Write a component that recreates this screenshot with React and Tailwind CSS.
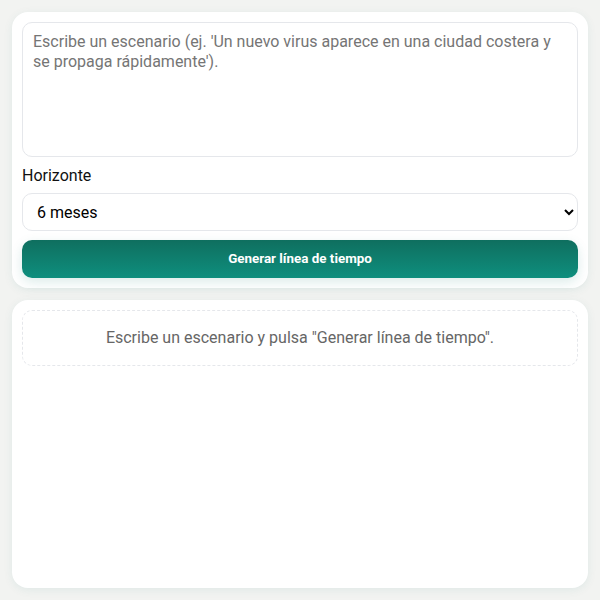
import { useState } from 'react';

const App = () => {
  const [scenario, setScenario] = useState('');
  const [horizon, setHorizon] = useState('6');

  return (
    <div
      className="h-screen bg-[#f2f3f1] p-3 flex flex-col gap-3"
      style={{ fontFamily: 'Roboto, "Noto Sans", sans-serif' }}
    >
      {/* Scenario form */}
      <div className="bg-white rounded-2xl p-[10px] shadow-[0_2px_10px_rgba(15,118,110,0.08)]">
        <textarea
          value={scenario}
          onChange={(e) => setScenario(e.target.value)}
          placeholder="Escribe un escenario (ej. 'Un nuevo virus aparece en una ciudad costera y se propaga rápidamente')."
          className="block w-full h-[135px] resize-none rounded-[10px] border border-[#e5e7eb] px-[10px] py-[9px] text-base leading-5 text-gray-800 placeholder:text-[#757575] outline-none"
        />
        <label className="block mt-[9px] mb-[7px] text-base leading-5 text-[#111]">Horizonte</label>
        <select
          value={horizon}
          onChange={(e) => setHorizon(e.target.value)}
          className="block w-full h-[38px] rounded-[10px] border border-[#e5e7eb] bg-white px-[10px] text-base text-black outline-none"
        >
          <option value="3">3 meses</option>
          <option value="6">6 meses</option>
          <option value="12">12 meses</option>
          <option value="24">24 meses</option>
        </select>
        <button className="mt-[9px] w-full h-[38px] rounded-[10px] bg-gradient-to-b from-[#0f6f5f] to-[#0e8f7e] text-white text-[13.4px] font-bold shadow-[0_4px_12px_rgba(15,118,110,0.15)]">
          Generar línea de tiempo
        </button>
      </div>

      {/* Result */}
      <div className="flex-1 bg-white rounded-2xl p-[10px] shadow-[0_2px_10px_rgba(15,118,110,0.08)]">
        <div className="h-[56px] rounded-[10px] border border-dashed border-[#e5e7eb] flex items-center justify-center text-base text-[#666]">
          Escribe un escenario y pulsa "Generar línea de tiempo".
        </div>
      </div>
    </div>
  );
};

export default App;
